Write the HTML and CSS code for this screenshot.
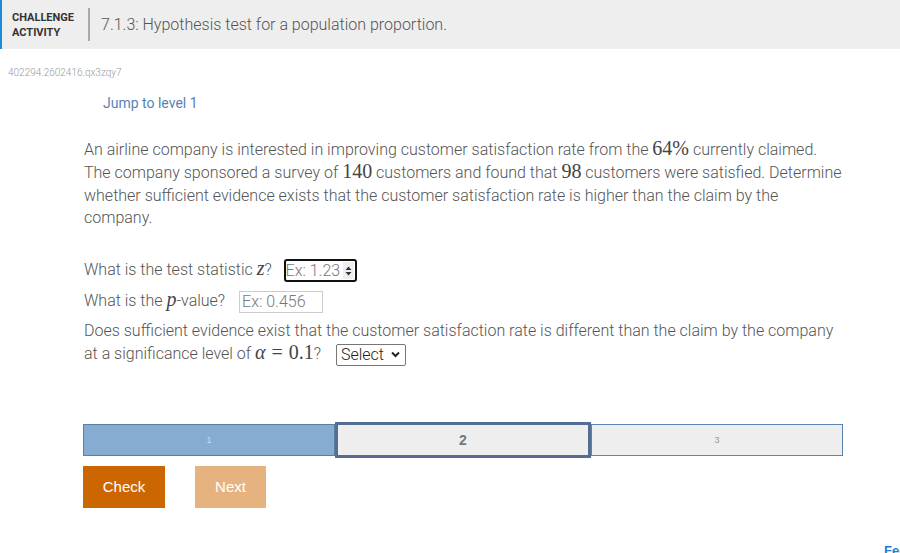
FILE: index.html
```html
<!DOCTYPE html>
<html lang="en">

<head>
  <meta charset="UTF-8" />
  <meta name="viewport" content="width=device-width, initial-scale=1.0" />
  <title>Challenge activity</title>
  <link rel="stylesheet" href="styles.css">
</head>

<body>
  <div class="header">
    <div class="label">CHALLENGE<br />ACTIVITY</div>
    <div class="divider"></div>
    <h2 class="title">7.1.3: Hypothesis test for a population proportion.</h2>
  </div>

  <div class="act-id">402294.2602416.qx3zqy7</div>

  <div class="content">
    <a class="jump" href="javascript:;">Jump to level 1</a>

    <p class="problem">
      An airline company is interested in improving customer satisfaction rate from the <span class="math">64%</span> currently claimed.
      The company sponsored a survey of <span class="math">140</span> customers and found that <span class="math">98</span> customers were satisfied. Determine
      whether sufficient evidence exists that the customer satisfaction rate is higher than the claim by the company.
    </p>

    <div class="question">
      What is the test statistic <span class="math var">z</span>?
      <span class="field focused">Ex: 1.23<span class="spin"><svg width="7" height="10" viewBox="0 0 7 10"><path d="M3.5 0.5 L6.5 4 L0.5 4 Z M3.5 9.5 L6.5 6 L0.5 6 Z" fill="#333"/></svg></span></span>
    </div>
    <div class="question">
      What is the <span class="math var">p</span>-value?
      <span class="field wide">Ex: 0.456</span>
    </div>
    <div class="question long">
      Does sufficient evidence exist that the customer satisfaction rate is different than the claim by the company
      at a significance level of <span class="math"><i>α</i><span class="eq">=</span>0.1</span>?
      <span class="select">Select<svg width="9" height="7" viewBox="0 0 9 7"><path d="M1 1.5 L4.5 5 L8 1.5" stroke="#222" stroke-width="2" fill="none"/></svg></span>
    </div>

    <div class="levels">
      <div class="level done">1</div>
      <div class="level current">2</div>
      <div class="level">3</div>
    </div>

    <div class="buttons">
      <button class="btn check">Check</button>
      <button class="btn next">Next</button>
    </div>
  </div>

  <a class="feedback" href="javascript:;">Feedback?</a>
</body>

</html>
```

FILE: styles.css
```css
* {
  margin: 0;
  padding: 0;
  box-sizing: border-box;
}

body {
  font-family: Roboto, "Liberation Sans", sans-serif;
  font-weight: 300;
  color: #555;
  background: #fff;
  overflow: hidden;
  height: 553px;
  position: relative;
}

.header {
  height: 49px;
  background: #eeeeee;
  border-left: 2px solid #1b8ad8;
  display: flex;
  align-items: center;
}

.header .label {
  font-size: 11px;
  font-weight: 700;
  line-height: 15px;
  color: #333;
  padding-left: 10px;
  width: 86px;
}

.header .divider {
  width: 2px;
  height: 33px;
  background: #aaa;
  margin-right: 11px;
}

.header .title {
  font-size: 16px;
  font-weight: 300;
  color: #555;
}

.act-id {
  font-size: 10px;
  color: #999;
  margin: 18px 0 0 8px;
}

.content {
  width: 760px;
  margin-left: 83px;
}

.jump {
  display: inline-block;
  margin: 17px 0 0 20px;
  font-size: 14px;
  font-weight: 400;
  color: #5783b4;
  text-decoration: none;
}

.problem {
  margin-top: 26px;
  padding-left: 1px;
  font-size: 16px;
  line-height: 22.3px;
}

.math {
  font-family: "Liberation Serif", serif;
  font-size: 20px;
  font-weight: 400;
  line-height: 1;
  color: #444;
}

.math.var {
  font-style: italic;
}

.math .eq {
  margin: 0 6px;
}

.question {
  padding-left: 1px;
  font-size: 16px;
  line-height: 23px;
  margin-top: 7px;
}

.question:first-of-type {
  margin-top: 29px;
}

.question.long {
  margin-top: 6px;
}

.field {
  display: inline-flex;
  align-items: center;
  justify-content: space-between;
  height: 23px;
  width: 73px;
  margin-left: 8px;
  padding: 0 2px;
  border: 1px solid #ccc;
  font-size: 16px;
  line-height: 1;
  color: #777;
  vertical-align: middle;
}

.field.focused {
  border: 2px solid #111;
  border-radius: 3px;
  padding: 0 1px 0 0;
}

.field.wide {
  width: 84px;
  height: 22px;
  margin-left: 10px;
}

.spin {
  display: inline-flex;
  align-items: center;
  justify-content: center;
  width: 11px;
  height: 17px;
  background: #eee;
}

.select {
  display: inline-flex;
  align-items: center;
  gap: 7px;
  height: 22px;
  margin-left: 11px;
  padding: 0 5px 0 4px;
  border: 1px solid #767676;
  border-radius: 2px;
  font-size: 16px;
  line-height: 1;
  color: #222;
  vertical-align: middle;
}

.levels {
  display: flex;
  margin-top: 58px;
  height: 32px;
  align-items: stretch;
}

.level {
  flex: 1;
  display: flex;
  align-items: center;
  justify-content: center;
  background: #eeeeee;
  border: 1px solid #5a85b0;
  font-family: "Liberation Sans", sans-serif;
  font-size: 9px;
  color: #999;
}

.level.done {
  background: #87acd2;
  border-color: #5a7ea4;
  color: #cfdcec;
}

.level.current {
  border: 3px solid #546e93;
  margin: -2px 0 -2px;
  font-size: 14px;
  font-weight: 700;
  color: #777;
}

.buttons {
  display: flex;
  gap: 30px;
  margin-top: 10px;
}

.btn {
  height: 42px;
  border: none;
  font-family: "Liberation Sans", sans-serif;
  font-size: 15px;
  color: #fff;
}

.btn.check {
  width: 82px;
  background: #cc6600;
}

.btn.next {
  width: 71px;
  background: #e6b380;
}

.feedback {
  position: absolute;
  left: 884px;
  top: 543px;
  font-family: "Liberation Sans", sans-serif;
  font-size: 13px;
  font-weight: 700;
  color: #1a7fd4;
  text-decoration: none;
}
```
